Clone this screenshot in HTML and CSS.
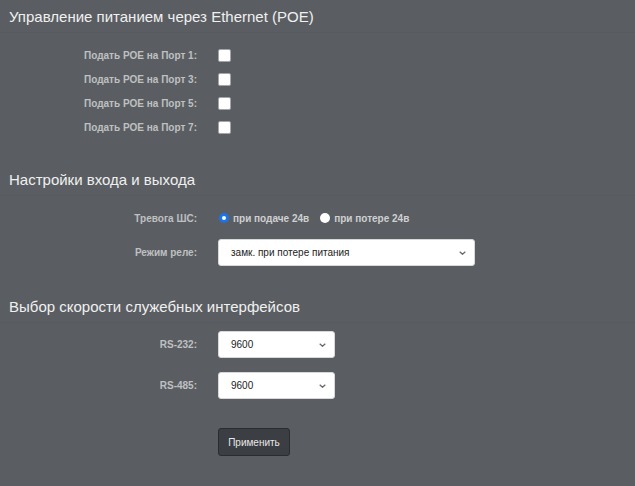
FILE: index.html
```html
<!DOCTYPE html>
<html lang="ru">
<head>
<meta charset="utf-8">
<link rel="stylesheet" href="styles.css">
</head>
<body>
<div class="page">
  <section class="section">
    <h2 class="title">Управление питанием через Ethernet (POE)</h2>
    <div class="rows rows-poe">
      <div class="row"><label class="label">Подать POE на Порт 1:</label><span class="check"></span></div>
      <div class="row"><label class="label">Подать POE на Порт 3:</label><span class="check"></span></div>
      <div class="row"><label class="label">Подать POE на Порт 5:</label><span class="check"></span></div>
      <div class="row"><label class="label">Подать POE на Порт 7:</label><span class="check"></span></div>
    </div>
  </section>
  <section class="section">
    <h2 class="title">Настройки входа и выхода</h2>
    <div class="rows rows-io">
      <div class="row"><label class="label">Тревога ШС:</label>
        <span class="radio on"></span><span class="rtext">при подаче 24в</span>
        <span class="radio"></span><span class="rtext">при потере 24в</span>
      </div>
      <div class="row"><label class="label">Режим реле:</label>
        <div class="select wide"><span>замк. при потере питания</span><svg class="chev" viewBox="0 0 7 4" width="7" height="4"><path d="M0.7 0.7l2.8 2.6 2.8-2.6" fill="none" stroke="#666" stroke-width="1.2"/></svg></div>
      </div>
    </div>
  </section>
  <section class="section">
    <h2 class="title">Выбор скорости служебных интерфейсов</h2>
    <div class="rows rows-rs">
      <div class="row"><label class="label">RS-232:</label>
        <div class="select narrow"><span>9600</span><svg class="chev" viewBox="0 0 7 4" width="7" height="4"><path d="M0.7 0.7l2.8 2.6 2.8-2.6" fill="none" stroke="#666" stroke-width="1.2"/></svg></div>
      </div>
      <div class="row"><label class="label">RS-485:</label>
        <div class="select narrow"><span>9600</span><svg class="chev" viewBox="0 0 7 4" width="7" height="4"><path d="M0.7 0.7l2.8 2.6 2.8-2.6" fill="none" stroke="#666" stroke-width="1.2"/></svg></div>
      </div>
    </div>
    <div class="actions"><button class="btn">Применить</button></div>
  </section>
</div>
</body>
</html>
```
FILE: styles.css
```css
html, body {
  margin: 0;
  padding: 0;
  background: #5a5e62;
}
body {
  font-family: "Liberation Sans", Arial, sans-serif;
  width: 635px;
  height: 486px;
  overflow: hidden;
}
.page {
  padding: 7px 0 0 0;
}
.title {
  margin: 0;
  padding: 0 9px 5px 9px;
  font-size: 15px;
  font-weight: normal;
  color: #f0f0f0;
  line-height: 20px;
  border-bottom: 1px solid #575b5f;
}
.rows {
  display: flex;
  flex-direction: column;
}
.rows-poe {
  padding-top: 15px;
  gap: 10px;
}
.row {
  display: flex;
  align-items: center;
}
.label {
  width: 218px;
  text-align: right;
  padding-right: 21px;
  box-sizing: border-box;
  font-size: 10px;
  font-weight: bold;
  color: #bfc0c1;
}
.rows-poe .row { height: 14px; }
.check {
  width: 13px;
  height: 13px;
  box-sizing: border-box;
  background: #fff;
  border: 1px solid #a4a7aa;
  border-radius: 2px;
}
.section:nth-child(2) { margin-top: 36px; }
.section:nth-child(3) { margin-top: 31px; }
.rows-io {
  padding-top: 14px;
  gap: 13px;
}
.rows-io .row:first-child { height: 16px; }
.radio {
  width: 10px;
  height: 10px;
  box-sizing: border-box;
  border-radius: 50%;
  background: #fff;
  margin: 0 4px 0 1px;
}
.radio.on {
  border: 3px solid #1a73e8;
}
.rtext {
  font-size: 10px;
  font-weight: bold;
  color: #cfd0d1;
  margin-right: 10px;
}
.select {
  height: 27px;
  box-sizing: border-box;
  background: #fff;
  border-radius: 3px;
  border: 1px solid #d8d8d8;
  display: flex;
  align-items: center;
  justify-content: space-between;
  padding: 0 8px 0 12px;
  font-size: 10px;
  color: #222;
}
.select.wide { width: 257px; }
.select.narrow { width: 117px; }
.chev { display: block; }
.rows-rs {
  padding-top: 8px;
  gap: 14px;
}
.actions {
  padding: 29px 0 0 218px;
}
.btn {
  width: 72px;
  height: 28px;
  background: #3b3e42;
  border: 1px solid #2a2c2f;
  border-radius: 3px;
  color: #e8e8e8;
  font-family: "Liberation Sans", Arial, sans-serif;
  font-size: 10px;
  padding: 0;
}
```
